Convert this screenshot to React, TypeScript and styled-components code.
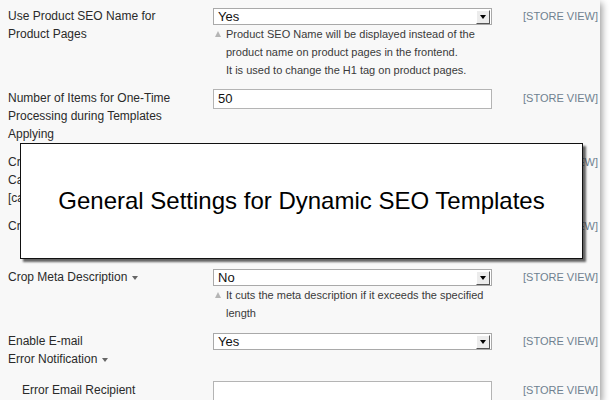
import styled, { createGlobalStyle } from 'styled-components'

const GlobalStyle = createGlobalStyle`
	html, body {
		margin: 0;
		padding: 0;
		background: #ffffff;
	}
	body {
		font-family: 'Liberation Sans', Arial, sans-serif;
	}
`

type Row = {
	label: string[]
	caret?: boolean
	indent?: boolean
	kind: 'select' | 'input'
	value: string
	hint?: string[]
	extra?: number
}

const rows: Row[] = [
	{
		label: ['Use Product SEO Name for', 'Product Pages'],
		kind: 'select',
		value: 'Yes',
		hint: [
			'Product SEO Name will be displayed instead of the',
			'product name on product pages in the frontend.',
			'It is used to change the H1 tag on product pages.'
		]
	},
	{
		label: ['Number of Items for One-Time', 'Processing during Templates', 'Applying'],
		kind: 'input',
		value: '50'
	},
	{
		label: ['Create Templates for', 'Categories with', '[category] Variable'],
		kind: 'select',
		value: 'No'
	},
	{
		label: ['Crop Meta Title'],
		caret: true,
		kind: 'select',
		value: 'No',
		hint: ['It cuts the meta title if it exceeds the specified length'],
		extra: 5
	},
	{
		label: ['Crop Meta Description'],
		caret: true,
		kind: 'select',
		value: 'No',
		hint: ['It cuts the meta description if it exceeds the specified', 'length']
	},
	{
		label: ['Enable E-mail', 'Error Notification'],
		caret: true,
		kind: 'select',
		value: 'Yes',
		extra: 3
	},
	{
		label: ['Error Email Recipient'],
		indent: true,
		kind: 'input',
		value: ''
	}
]

const App = () => {
	return (
		<>
			<GlobalStyle />
			<Panel>
				{rows.map((row, i) => (
					<FieldRow key={i} $extra={row.extra ?? 0}>
						<Label $indent={row.indent}>
							{row.label.map((line, j) => (
								<div key={j}>
									{line}
									{row.caret && j === row.label.length - 1 && <Caret />}
								</div>
							))}
						</Label>
						<Value>
							{row.kind === 'select' ? (
								<Select>
									<span>{row.value}</span>
									<ArrowButton>
										<ArrowDown />
									</ArrowButton>
								</Select>
							) : (
								<TextBox>{row.value}</TextBox>
							)}
							{row.hint && (
								<Hint>
									<HintArrow />
									<div>
										{row.hint.map((line, j) => (
											<div key={j}>{line}</div>
										))}
									</div>
								</Hint>
							)}
						</Value>
						<Scope>[STORE VIEW]</Scope>
					</FieldRow>
				))}
				<Overlay>General Settings for Dynamic SEO Templates</Overlay>
			</Panel>
		</>
	)
}

const Panel = styled.div`
	position: relative;
	width: 600px;
	height: 400px;
	box-sizing: border-box;
	padding: 7px 0 0 8px;
	background: #f8f8f8;
	overflow: hidden;
	box-shadow: 2px 3px 7px rgba(0, 0, 0, 0.4);
	display: flex;
	flex-direction: column;
	gap: 10px;
`

const FieldRow = styled.div<{ $extra: number }>`
	display: grid;
	grid-template-columns: 205px 279px auto;
	align-items: start;
	flex-shrink: 0;
	margin-bottom: ${({ $extra }) => $extra}px;
`

const Label = styled.div<{ $indent?: boolean }>`
	font-size: 12px;
	line-height: 18px;
	color: #2a2a2a;
	padding-left: ${({ $indent }) => ($indent ? '14px' : '0')};
`

const Caret = styled.span`
	display: inline-block;
	margin-left: 5px;
	vertical-align: middle;
	width: 0;
	height: 0;
	border-left: 3.5px solid transparent;
	border-right: 3.5px solid transparent;
	border-top: 4px solid #666;
`

const Value = styled.div`
	display: flex;
	flex-direction: column;
	padding-top: 1px;
`

const Select = styled.div`
	box-sizing: border-box;
	height: 17px;
	display: flex;
	align-items: center;
	justify-content: space-between;
	background: #ffffff;
	border: 1px solid #a9a9a9;
	padding-left: 4px;
	font-size: 13px;
	color: #111;
`

const ArrowButton = styled.span`
	box-sizing: border-box;
	width: 14px;
	height: 14px;
	margin-right: 1px;
	display: flex;
	align-items: center;
	justify-content: center;
	background: #ececec;
	border-top: 1px solid #ffffff;
	border-left: 1px solid #ffffff;
	border-right: 1px solid #555;
	border-bottom: 1px solid #555;
`

const ArrowDown = styled.span`
	width: 0;
	height: 0;
	border-left: 3px solid transparent;
	border-right: 3px solid transparent;
	border-top: 4px solid #000;
`

const TextBox = styled.div`
	box-sizing: border-box;
	height: 20px;
	margin-top: -1px;
	background: #ffffff;
	border: 1px solid #b4b4b4;
	padding: 0 4px;
	font-size: 13px;
	line-height: 18px;
	color: #111;
`

const Hint = styled.div`
	display: flex;
	gap: 5px;
	font-size: 11px;
	line-height: 18px;
	color: #3a3a3a;
	padding-left: 2px;
`

const HintArrow = styled.span`
	margin-top: 6px;
	width: 0;
	height: 0;
	border-left: 3.5px solid transparent;
	border-right: 3.5px solid transparent;
	border-bottom: 6px solid #b5b5b5;
`

const Scope = styled.div`
	padding-left: 31px;
	font-size: 11px;
	line-height: 18px;
	color: #6f8190;
	white-space: nowrap;
`

const Overlay = styled.div`
	position: absolute;
	left: 20px;
	top: 143px;
	width: 563px;
	height: 116px;
	box-sizing: border-box;
	display: flex;
	align-items: center;
	justify-content: center;
	background: #ffffff;
	border: 1px solid #111;
	box-shadow: 3px 3px 2px rgba(0, 0, 0, 0.6);
	font-size: 24px;
	color: #000;
`

export default App
